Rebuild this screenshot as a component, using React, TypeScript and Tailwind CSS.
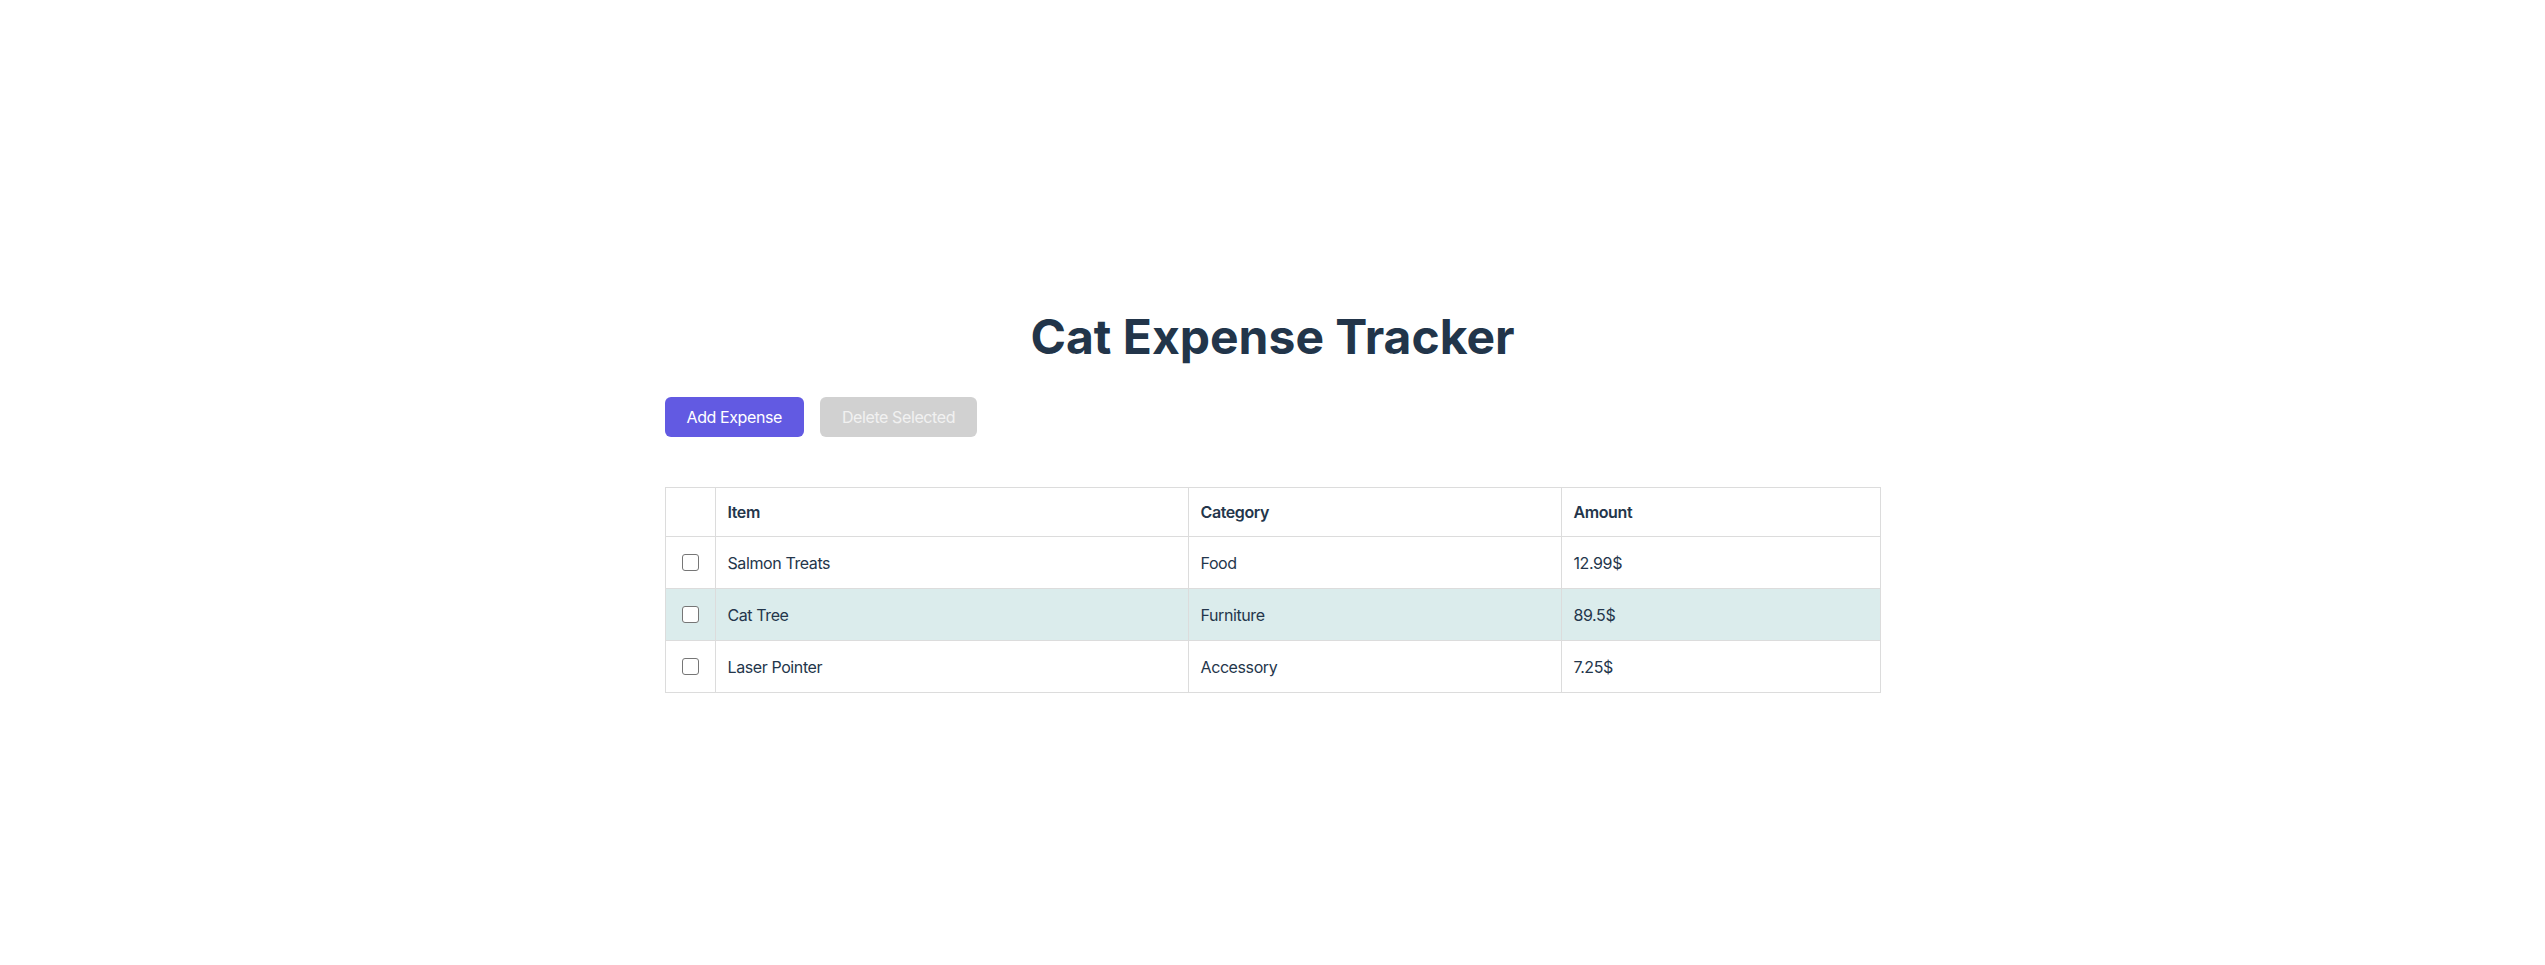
import { useState } from 'react';

type Expense = {
  id: number;
  item: string;
  category: string;
  amount: number;
};

const initialExpenses: Expense[] = [
  { id: 1, item: 'Salmon Treats', category: 'Food', amount: 12.99 },
  { id: 2, item: 'Cat Tree', category: 'Furniture', amount: 89.5 },
  { id: 3, item: 'Laser Pointer', category: 'Accessory', amount: 7.25 },
];

export default function App() {
  const [expenses] = useState<Expense[]>(initialExpenses);
  const [selected, setSelected] = useState<number[]>([]);

  const toggle = (id: number) => {
    setSelected((prev) => (prev.includes(id) ? prev.filter((x) => x !== id) : [...prev, id]));
  };

  return (
    <div className="min-h-screen bg-white font-['Inter',sans-serif] text-[#24364b]">
      <div className="mx-auto w-[1216px] pt-[313px]">
        <h1 className="text-center text-[48px] font-bold leading-[48px] text-[#22354a]">
          Cat Expense Tracker
        </h1>

        {/* Actions */}
        <div className="mt-[36px] flex gap-4 tracking-[-0.4px]">
          <button className="h-10 rounded-md bg-[#625ae2] px-[22px] text-base text-white">
            Add Expense
          </button>
          <button
            disabled={selected.length === 0}
            className="h-10 rounded-md bg-[#d1d1d1] px-[22px] text-base text-[#f1f1f1]"
          >
            Delete Selected
          </button>
        </div>

        {/* Expense table */}
        <table className="mt-[50px] w-full border-collapse text-left text-base tracking-[-0.4px]">
          <thead>
            <tr>
              <th className="w-[50px] border border-[#dcdcdc] px-3 py-3 leading-6"></th>
              <th className="w-[473px] border border-[#dcdcdc] px-3 py-3 font-semibold leading-6">Item</th>
              <th className="w-[373px] border border-[#dcdcdc] px-3 py-3 font-semibold leading-6">Category</th>
              <th className="border border-[#dcdcdc] px-3 py-3 font-semibold leading-6">Amount</th>
            </tr>
          </thead>
          <tbody>
            {expenses.map((e, i) => (
              <tr key={e.id} className={i === 1 ? 'bg-[#dbecec]' : 'bg-white'}>
                <td className="h-[52px] border border-[#dcdcdc] px-0 text-center">
                  <input
                    type="checkbox"
                    checked={selected.includes(e.id)}
                    onChange={() => toggle(e.id)}
                    className="block mx-auto h-[17px] w-[17px] appearance-none rounded-[3px] border border-[#767676] bg-white"
                  />
                </td>
                <td className="h-[52px] border border-[#dcdcdc] px-3 leading-6">{e.item}</td>
                <td className="h-[52px] border border-[#dcdcdc] px-3 leading-6">{e.category}</td>
                <td className="h-[52px] border border-[#dcdcdc] px-3 leading-6">{e.amount}$</td>
              </tr>
            ))}
          </tbody>
        </table>
      </div>
    </div>
  );
}
